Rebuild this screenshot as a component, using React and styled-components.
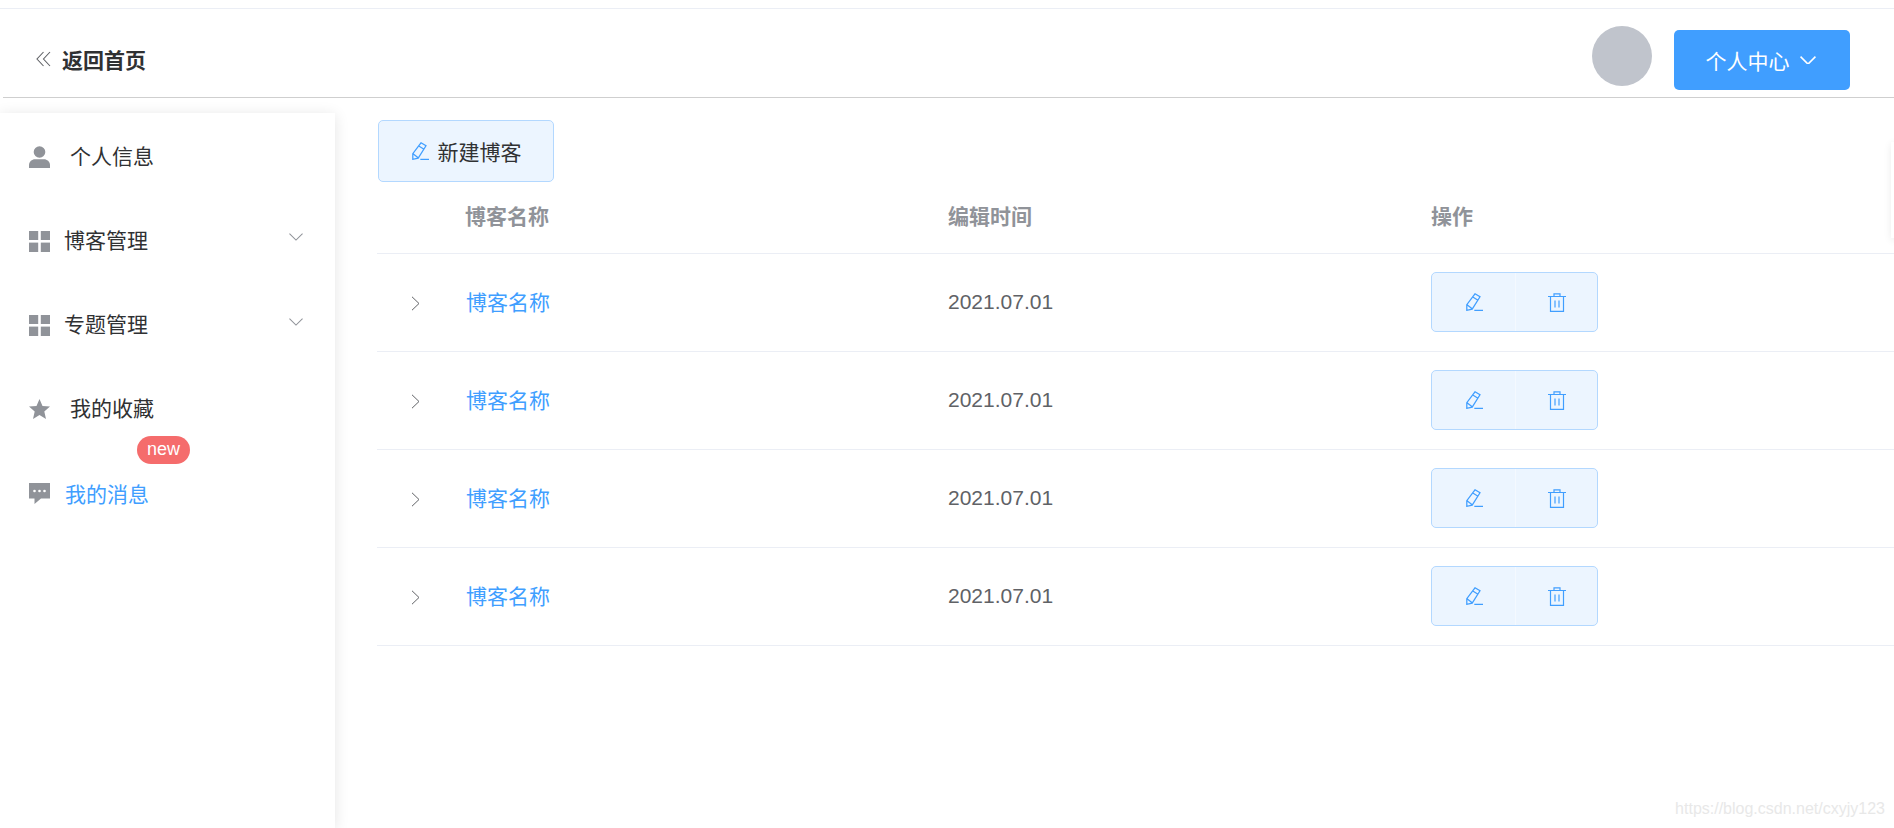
import React from 'react'
import styled, { createGlobalStyle } from 'styled-components'

const GlobalStyle = createGlobalStyle`
  html, body {
    margin: 0;
    height: 100%;
    background: #fff;
    overflow: hidden;
    font-family: 'Liberation Sans', 'Noto Sans CJK SC', sans-serif;
  }
`

const Page = styled.div`
  position: relative;
  width: 1894px;
  height: 828px;
  overflow: hidden;
  display: flex;
  flex-direction: column;
`

const TopRule = styled.div`
  height: 8px;
  flex: none;
  border-bottom: 1px solid #ebeef5;
`

const Header = styled.header`
  height: 89px;
  flex: none;
  box-sizing: border-box;
  margin-left: 3px;
  padding: 14px 44px 0 33px;
  border-bottom: 1px solid #cfcfcf;
  display: flex;
  align-items: center;
  justify-content: space-between;
`

const BackLink = styled.a`
  display: flex;
  align-items: center;
  gap: 11px;
  margin-top: -2px;
  font-size: 21px;
  font-weight: 700;
  color: #303133;
  svg { color: #606266; }
`

const UserArea = styled.div`
  display: flex;
  align-items: center;
  gap: 22px;
`

const Avatar = styled.div`
  width: 60px;
  height: 60px;
  margin-top: -8px;
  border-radius: 50%;
  background: #c0c4cc;
`

const UserButton = styled.button`
  width: 176px;
  height: 60px;
  padding: 0 3px 0 0;
  border: 0;
  border-radius: 5px;
  background: #409eff;
  color: #fff;
  font: inherit;
  font-size: 21px;
  display: flex;
  align-items: center;
  justify-content: center;
  gap: 10px;
`

const Body = styled.div`
  flex: 1;
  display: flex;
  min-height: 0;
`

const Sidebar = styled.aside`
  position: relative;
  width: 335px;
  flex: none;
  margin-top: 15px;
  background: #fff;
  box-shadow: 0 2px 14px rgba(0, 0, 0, 0.11);
`

const MenuRow = styled.div`
  height: 84.5px;
  padding: 0 29px;
  display: flex;
  align-items: center;
  font-size: 21px;
  color: ${(p) => (p.$active ? '#409eff' : '#303133')};
  svg.lead {
    color: #909399;
    flex: none;
    margin-top: ${(p) => p.$iconDrop}px;
  }
`

const MenuLabel = styled.span`
  margin-left: ${(p) => p.$gap}px;
  margin-top: ${(p) => -p.$lift}px;
  flex: 1;
`

const Caret = styled.span`
  display: flex;
  margin-top: -5px;
  margin-right: 3px;
  color: #909399;
`

const Badge = styled.span`
  position: absolute;
  left: 137px;
  top: 323px;
  width: 53px;
  height: 28px;
  border-radius: 14px;
  background: #f56c6c;
  color: #fff;
  font-size: 18px;
  line-height: 27px;
  text-align: center;
`

const Main = styled.main`
  flex: 1;
  min-width: 0;
  padding: 22px 0 0 42px;
`

const NewButton = styled.button`
  width: 176px;
  height: 62px;
  margin-left: 1px;
  padding: 0 0 0 1px;
  border: 1px solid #b3d8ff;
  border-radius: 5px;
  background: #ecf5ff;
  color: #303133;
  font: inherit;
  font-size: 21px;
  display: flex;
  align-items: center;
  justify-content: center;
  gap: 8px;
  svg { color: #409eff; }
`

const Row = styled.div`
  display: grid;
  grid-template-columns: 88px 483px 483px 1fr;
  align-items: center;
  height: ${(p) => (p.$head ? 72 : 98)}px;
  box-sizing: border-box;
  border-bottom: 1px solid #ebeef5;
  font-size: 21px;
  color: ${(p) => (p.$head ? '#909399' : '#606266')};
  font-weight: ${(p) => (p.$head ? 700 : 400)};
`

const HeadCell = styled.span`
  margin-top: -6px;
`

const DateCell = styled.span`
  margin-top: -2px;
`

const Expand = styled.span`
  display: flex;
  padding-left: 34px;
  color: #606266;
  margin-top: 2px;
`

const BlogLink = styled.a`
  color: #409eff;
  padding-left: 1px;
  margin-top: -4px;
`

const ActionGroup = styled.div`
  display: flex;
  box-sizing: border-box;
  width: 167px;
  height: 60px;
  margin-top: -1px;
  border: 1px solid #b3d8ff;
  border-radius: 5px;
  background: #ecf5ff;
  overflow: hidden;
`

const ActionButton = styled.button`
  flex: 1;
  padding: 0 0 0 ${(p) => (p.$divided ? 0 : 2)}px;
  border: 0;
  border-left: ${(p) => (p.$divided ? '1px solid #f4f9ff' : '0')};
  background: transparent;
  color: #409eff;
  display: flex;
  align-items: center;
  justify-content: center;
`

const EdgeCard = styled.div`
  position: absolute;
  left: 1891px;
  top: 142px;
  width: 40px;
  height: 96px;
  background: #fff;
  box-shadow: 0 2px 8px rgba(0, 0, 0, 0.08);
`

const Watermark = styled.span`
  position: absolute;
  right: 9px;
  top: 799px;
  font-size: 16px;
  line-height: 20px;
  color: #e8e8e8;
`

const DoubleLeft = () => (
  <svg width="15" height="16" viewBox="0 0 15 16" fill="none" stroke="currentColor" strokeWidth="1.1">
    <path d="M7.5 1 1 8l6.5 7M14 1 7.5 8l6.5 7" />
  </svg>
)

const ChevronDown = ({ size = 16, weight = 1.5 }) => (
  <svg width={size} height={size * 0.55} viewBox="0 0 15 8" fill="none" stroke="currentColor" strokeWidth={weight}>
    <path d="M.5.5 7.5 7.5 14.5.5" />
  </svg>
)

const ChevronRight = () => (
  <svg width="9" height="15" viewBox="0 0 9 15" fill="none" stroke="currentColor" strokeWidth="1">
    <path d="M1 .8 8 7.5 1 14.2" />
  </svg>
)

const UserIcon = () => (
  <svg className="lead" width="21" height="22" viewBox="0 0 21 22" fill="currentColor">
    <circle cx="10.5" cy="6" r="5.8" />
    <path d="M0 22v-3c0-3.6 3-5.8 6-5.8h9c3 0 6 2.2 6 5.8v3z" />
  </svg>
)

const GridIcon = () => (
  <svg className="lead" width="21" height="21" viewBox="0 0 21 21" fill="currentColor">
    <rect width="9.2" height="9" />
    <rect x="11.8" width="9.2" height="9" />
    <rect y="11.6" width="9.2" height="9.4" />
    <rect x="11.8" y="11.6" width="9.2" height="9.4" />
  </svg>
)

const StarIcon = () => (
  <svg className="lead" width="21" height="20" viewBox="0 0 21 20" fill="currentColor">
    <path d="m10.5 0 3 6.9 7.5.7-5.7 5 1.7 7.4-6.5-3.9L4 20l1.7-7.4L0 7.6l7.5-.7z" />
  </svg>
)

const ChatIcon = () => (
  <svg className="lead" width="21" height="21" viewBox="0 0 21 21">
    <path fill="currentColor" d="M0 0h21v15.5h-9L5.5 21v-5.5H0z" />
    <circle cx="5.5" cy="8" r="1.3" fill="#fff" />
    <circle cx="10.5" cy="8" r="1.3" fill="#fff" />
    <circle cx="15.5" cy="8" r="1.3" fill="#fff" />
  </svg>
)

const EditIcon = () => (
  <svg width="18" height="18" viewBox="0 0 18 18" fill="none" stroke="currentColor" strokeWidth="1.25">
    <path d="M9 .8 14 3.8 6.2 16.2.8 17.3.8 11.6zM6.8 4l5.2 3.2M1 11.8 6.2 15.8" />
    <path d="M8.3 17.4H17" />
  </svg>
)

const TrashIcon = () => (
  <svg width="18" height="19" viewBox="0 0 18 19" fill="none" stroke="currentColor" strokeWidth="1.2">
    <path d="M0 3.5h18M6 3.5V.8h6v2.7M2.5 3.5v14.8h13V3.5M7 7.5v7M11 7.5v7" />
  </svg>
)

const menu = [
  { label: '个人信息', icon: <UserIcon />, gap: 20, iconDrop: 3, lift: 0 },
  { label: '博客管理', icon: <GridIcon />, gap: 14, iconDrop: 3, lift: 2, caret: true },
  { label: '专题管理', icon: <GridIcon />, gap: 14, iconDrop: 3, lift: 2, caret: true },
  { label: '我的收藏', icon: <StarIcon />, gap: 20, iconDrop: 0, lift: 4 },
  { label: '我的消息', icon: <ChatIcon />, gap: 15, iconDrop: 0, lift: 0, active: true },
]

export default function App() {
  return (
    <Page>
      <GlobalStyle />
      <TopRule />
      <Header>
        <BackLink>
          <DoubleLeft />
          返回首页
        </BackLink>
        <UserArea>
          <Avatar />
          <UserButton>
            个人中心
            <ChevronDown />
          </UserButton>
        </UserArea>
      </Header>
      <Body>
        <Sidebar>
          {menu.map((item) => (
            <MenuRow key={item.label} $active={item.active} $iconDrop={item.iconDrop}>
              {item.icon}
              <MenuLabel $gap={item.gap} $lift={item.lift}>
                {item.label}
              </MenuLabel>
              {item.caret && (
                <Caret>
                  <ChevronDown size={14} weight={1.1} />
                </Caret>
              )}
            </MenuRow>
          ))}
          <Badge>new</Badge>
        </Sidebar>
        <Main>
          <NewButton>
            <EditIcon />
            新建博客
          </NewButton>
          <Row $head>
            <span />
            <HeadCell>博客名称</HeadCell>
            <HeadCell>编辑时间</HeadCell>
            <HeadCell>操作</HeadCell>
          </Row>
          {[1, 2, 3, 4].map((id) => (
            <Row key={id}>
              <Expand>
                <ChevronRight />
              </Expand>
              <BlogLink>博客名称</BlogLink>
              <DateCell>2021.07.01</DateCell>
              <ActionGroup>
                <ActionButton>
                  <EditIcon />
                </ActionButton>
                <ActionButton $divided>
                  <TrashIcon />
                </ActionButton>
              </ActionGroup>
            </Row>
          ))}
        </Main>
      </Body>
      <EdgeCard />
      <Watermark>https://blog.csdn.net/cxyjy123</Watermark>
    </Page>
  )
}
